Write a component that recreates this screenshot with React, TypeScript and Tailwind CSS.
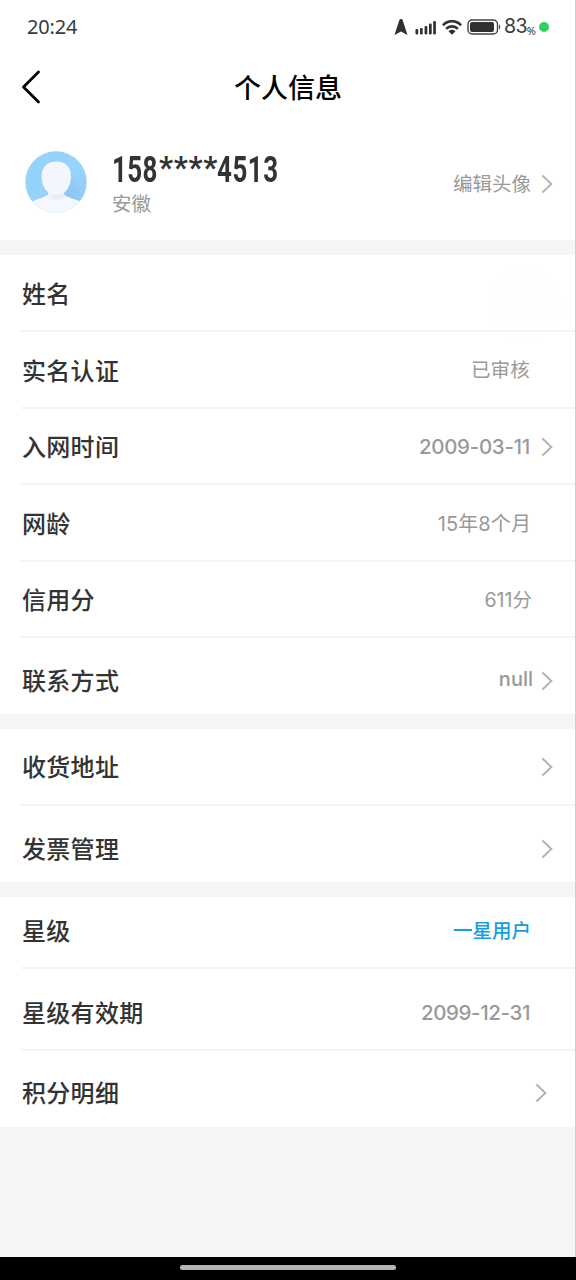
import { clsx } from "clsx";

type Row = {
  label: string;
  value?: string;
  arrow?: boolean;
  className: string;
  valueClass?: string;
  arrowClass?: string;
};

const basicRows: Row[] = [
  { label: "姓名", className: "h-[77px] pt-0.5" },
  { label: "实名认证", value: "已审核", className: "h-[77px] pt-0.5", valueClass: "mr-[23px] mt-px text-[19.5px] tracking-[0.2px] text-[#999]" },
  { label: "入网时间", value: "2009-03-11", arrow: true, className: "h-[76px] pt-0.5", valueClass: "mr-[11px] text-[20.5px] font-medium tracking-[-0.3px] text-[#999]" },
  { label: "网龄", value: "15年8个月", className: "h-[77px] pt-0.5", valueClass: "mr-[22px] text-[20px] tracking-[0.1px] text-[#999]" },
  { label: "信用分", value: "611分", className: "h-[76px] pt-0.5", valueClass: "mr-[21px] mt-0.5 text-[19.5px] text-[#999]" },
  { label: "联系方式", value: "null", arrow: true, className: "h-[76px] pt-2.5", valueClass: "mr-[8px] -mt-1 text-[20px] font-medium text-[#999]" },
];

const manageRows: Row[] = [
  { label: "收货地址", arrow: true, className: "h-[77px] pt-px" },
  { label: "发票管理", arrow: true, className: "h-[76px] pt-2.5" },
];

const starRows: Row[] = [
  { label: "星级", value: "一星用户", className: "h-[72px] pb-0.5", valueClass: "mr-[22px] mt-px text-[19.5px] font-medium text-[#149fe0]" },
  { label: "星级有效期", value: "2099-12-31", className: "h-[82px] pt-2", valueClass: "mr-[23px] text-[20.5px] font-medium tracking-[-0.4px] text-[#999]" },
  { label: "积分明细", arrow: true, className: "h-[76px] pt-2", arrowClass: "mr-1.5" },
];

function Chevron({ className }: { className?: string }) {
  return (
    <svg className={clsx("w-3 h-5 shrink-0", className)} viewBox="0 0 12 20" fill="none">
      <path d="M1.4 1.5L10.4 10L1.4 18.5" stroke="#b2b2b2" strokeWidth="1.9" />
    </svg>
  );
}

function StatusBar() {
  return (
    <div className="h-[54px] flex items-center justify-between pl-[27px] pr-[27px] text-[#3a3a3a]">
      <span className="text-xl font-['Noto_Sans',sans-serif] tracking-[-0.2px]">20:24</span>
      <div className="flex items-center">
        <svg className="w-3.5 h-4 mr-[7px]" viewBox="0 0 14 16">
          <path d="M7 0C8 0 8.5 .7 8.8 1.6L13.5 16L7 12.6L.5 16L5.2 1.6C5.5 .7 6 0 7 0Z" fill="#303030" />
        </svg>
        <svg className="w-[22px] h-[15px] mr-[5px]" viewBox="0 0 22 15" fill="#303030">
          <rect x="0.5" y="9" width="2.7" height="5.5" rx="1.2" />
          <rect x="5" y="8" width="2.7" height="6.5" rx="1.2" />
          <rect x="9.6" y="6" width="2.7" height="8.5" rx="1.2" />
          <rect x="14" y="3.5" width="2.7" height="11" rx="1.2" />
          <rect x="18.2" y="1" width="2.7" height="13.5" rx="1.2" />
        </svg>
        <svg className="w-5 h-[15px] mr-[5px]" viewBox="0 0 20 15" fill="none" stroke="#303030" strokeWidth="2.7">
          <path d="M.9 5.2C6-.1 14-.1 19.1 5.2" />
          <path d="M4.1 8.9C7.5 5.6 12.5 5.6 15.9 8.9" />
          <path d="M6.5 11.2C8.5 9.2 11.5 9.2 13.5 11.2L10 14.8Z" fill="#303030" stroke="none" />
        </svg>
        <svg className="w-[34px] h-4 mr-[3px]" viewBox="0 0 34 16" fill="none">
          <rect x="1" y="1" width="29.5" height="14" rx="4.2" stroke="#444" strokeWidth="1.4" />
          <rect x="3" y="3" width="24" height="10" rx="2.2" fill="#303030" />
          <path d="M32 5.5C33.6 6 33.6 10 32 10.5Z" fill="#444" />
        </svg>
        <span className="text-[19.5px] leading-none font-['Inter',sans-serif] tracking-[-0.6px]">83</span>
        <span className="text-[11px] leading-none mt-1.5 mr-[3px] font-['Noto_Sans',sans-serif]">%</span>
        <span className="w-[10px] h-[10px] rounded-full bg-[#2fcf60]" />
      </div>
    </div>
  );
}

function Avatar() {
  return (
    <svg className="w-[62px] h-[62px]" viewBox="0 0 62 62">
      <defs>
        <clipPath id="face">
          <circle cx="31" cy="31" r="30.7" />
        </clipPath>
        <linearGradient id="sky" x1="0" y1="0" x2="1" y2="1">
          <stop offset="0" stopColor="#92d2fa" />
          <stop offset="0.6" stopColor="#98d3fb" />
          <stop offset="1" stopColor="#90c8f8" />
        </linearGradient>
        <filter id="soft">
          <feGaussianBlur stdDeviation="2.5" />
        </filter>
      </defs>
      <g clipPath="url(#face)">
        <rect width="62" height="62" fill="url(#sky)" />
        <path d="M39 19C48 25 53 34 54 49L35 46Z" fill="#8cbef3" opacity="0.55" filter="url(#soft)" />
        <path d="M0 54C9 49 17 47 23 44V37H39V44C44 47 52 48 62 54V62H0Z" fill="#f5f7ff" />
        <ellipse cx="32.5" cy="44" rx="7" ry="3.5" fill="#dee2f6" filter="url(#soft)" />
        <path d="M31.2 10.5C40.5 10.5 46 16.5 46 25.5C46 36 39.5 44.5 31.2 44.5C23 44.5 16.5 36 16.5 25.5C16.5 16.5 22 10.5 31.2 10.5Z" fill="#f3f6ff" />
      </g>
    </svg>
  );
}

function Section({ rows }: { rows: Row[] }) {
  return (
    <section className="bg-white">
      {rows.map((row, i) => (
        <div
          key={row.label}
          className={clsx(
            "ml-[21px] pl-px pr-[23px] flex items-center",
            row.className,
            i < rows.length - 1 && "border-b-2 border-[#f4f4f4]"
          )}
        >
          <span className="flex-1 text-2xl font-medium tracking-[0.3px] text-[#333]">{row.label}</span>
          {row.value && (
            <span className={clsx("font-['Inter','Noto_Sans_CJK_SC',sans-serif]", row.valueClass)}>{row.value}</span>
          )}
          {row.arrow && <Chevron className={row.arrowClass} />}
        </div>
      ))}
    </section>
  );
}

export default function App() {
  return (
    <div className="relative w-[576px] h-[1280px] overflow-hidden flex flex-col bg-[#f5f5f5] font-['Noto_Sans','Noto_Sans_CJK_SC',sans-serif]">
      <div className="bg-white h-60 shrink-0">
        <StatusBar />
        <header className="h-[66px] grid grid-cols-[1fr_auto_1fr] items-center">
          <svg className="w-5 h-[34px] ml-[21px]" viewBox="0 0 20 34" fill="none">
            <path d="M17.5 2L2.5 17L17.5 32" stroke="#000" strokeWidth="2.8" strokeLinecap="round" strokeLinejoin="round" />
          </svg>
          <h1 className="text-[27px] font-medium text-black pt-0.5">个人信息</h1>
        </header>
        <div className="h-[120px] flex items-center pl-[25px] pr-[23px] pt-1">
          <Avatar />
          <div className="ml-[25px] flex-1 pt-[5px]">
            <div className="w-[168px] h-9 flex items-center text-[#333] text-[37px] font-bold leading-9 font-['Roboto',sans-serif]">
              <span className="inline-block origin-left scale-x-[0.7] w-[47px] tracking-[0.5px]">158</span>
              <span className="inline-block w-[58px] text-[31px] tracking-[0.7px] -mt-1">****</span>
              <span className="inline-block origin-left scale-x-[0.7] w-[60px] tracking-[0.8px]">4513</span>
            </div>
            <div className="text-[19.5px] leading-7 mt-0.5 text-[#999]">安徽</div>
          </div>
          <span className="text-[19.5px] text-[#999] mr-2.5 pt-1">编辑头像</span>
          <Chevron className="mt-[3px]" />
        </div>
      </div>

      <main className="flex-1 flex flex-col gap-[15px] pt-[15px]">
        <Section rows={basicRows} />
        <Section rows={manageRows} />
        <Section rows={starRows} />
      </main>

      <footer className="h-[23px] shrink-0 bg-black flex justify-center pt-2">
        <div className="w-[216px] h-[5px] rounded-full bg-[#b4b4b4]" />
      </footer>

      <div className="absolute right-[14px] top-[268px] w-[74px] h-[74px] rounded-full bg-black/[0.004]" />
      <div className="absolute right-0 top-0 w-px h-[1257px] bg-[#cfcfcf]" />
    </div>
  );
}
